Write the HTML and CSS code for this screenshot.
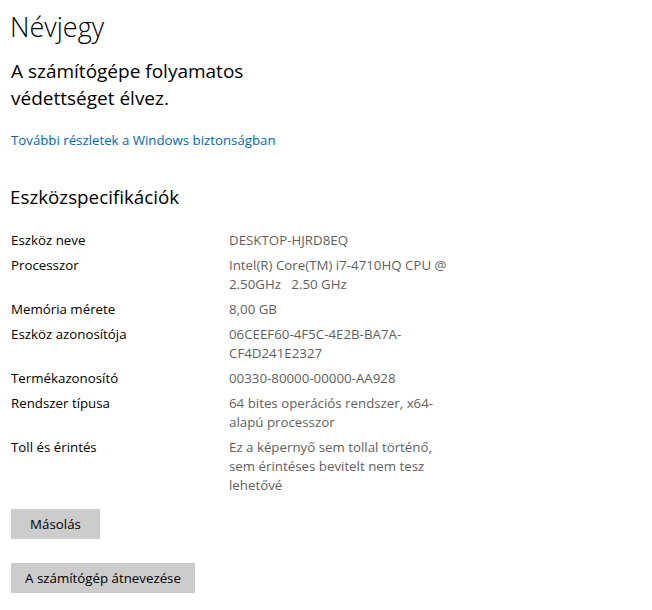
FILE: index.html
```html
<!DOCTYPE html>
<html lang="hu">
<head>
<meta charset="utf-8">
<title>Névjegy</title>
<link rel="stylesheet" href="styles.css">
</head>
<body>
<main class="page">
  <h1 class="title">Névjegy</h1>
  <p class="status">A számítógépe folyamatos<br>védettséget élvez.</p>
  <a class="link" href="#">További részletek a Windows biztonságban</a>
  <h2 class="section">Eszközspecifikációk</h2>
  <div class="specs">
    <div class="label">Eszköz neve</div><div class="value">DESKTOP-HJRD8EQ</div>
    <div class="label">Processzor</div><div class="value">Intel(R) Core(TM) i7-4710HQ CPU @ 2.50GHz&nbsp;&nbsp; 2.50 GHz</div>
    <div class="label">Memória mérete</div><div class="value">8,00 GB</div>
    <div class="label">Eszköz azonosítója</div><div class="value">06CEEF60-4F5C-4E2B-BA7A-CF4D241E2327</div>
    <div class="label">Termékazonosító</div><div class="value">00330-80000-00000-AA928</div>
    <div class="label">Rendszer típusa</div><div class="value">64 bites operációs rendszer, x64-alapú processzor</div>
    <div class="label">Toll és érintés</div><div class="value">Ez a képernyő sem tollal történő, sem érintéses bevitelt nem tesz lehetővé</div>
  </div>
  <div class="actions">
    <button class="btn btn-copy">Másolás</button>
    <button class="btn btn-rename">A számítógép átnevezése</button>
  </div>
</main>
</body>
</html>
```
FILE: styles.css
```css
html, body {
  margin: 0;
  padding: 0;
  background: #fff;
}
body {
  font-family: "Open Sans", "Noto Sans", sans-serif;
  color: #000;
}
.page {
  padding: 8px 0 0 11px;
  display: flex;
  flex-direction: column;
  align-items: flex-start;
}
.title {
  margin: 0 0 0 -1px;
  font-size: 27px;
  font-weight: 300;
  line-height: 38px;
}
.status {
  margin: 12px 0 0 0;
  font-size: 19px;
  font-weight: 400;
  line-height: 27px;
}
.link {
  margin-top: 19px;
  font-size: 13.25px;
  line-height: 19px;
  color: #0067b8;
  text-decoration: none;
}
.section {
  margin: 34px 0 0 -1px;
  font-size: 18.8px;
  font-weight: 400;
  line-height: 27px;
}
.specs {
  margin-top: 20px;
  display: grid;
  grid-template-columns: 218px 228px;
  row-gap: 6px;
  font-size: 13.3px;
  line-height: 19px;
}
.value {
  color: #5f5f5f;
}
.actions {
  margin-top: 14px;
  display: flex;
  flex-direction: column;
  align-items: flex-start;
  gap: 24px;
}
.btn {
  font-family: inherit;
  font-size: 13.3px;
  color: #000;
  background: #cccccc;
  border: none;
  height: 30px;
  padding: 0;
  white-space: nowrap;
}
.btn-copy {
  width: 89px;
}
.btn-rename {
  width: 184px;
}
```
